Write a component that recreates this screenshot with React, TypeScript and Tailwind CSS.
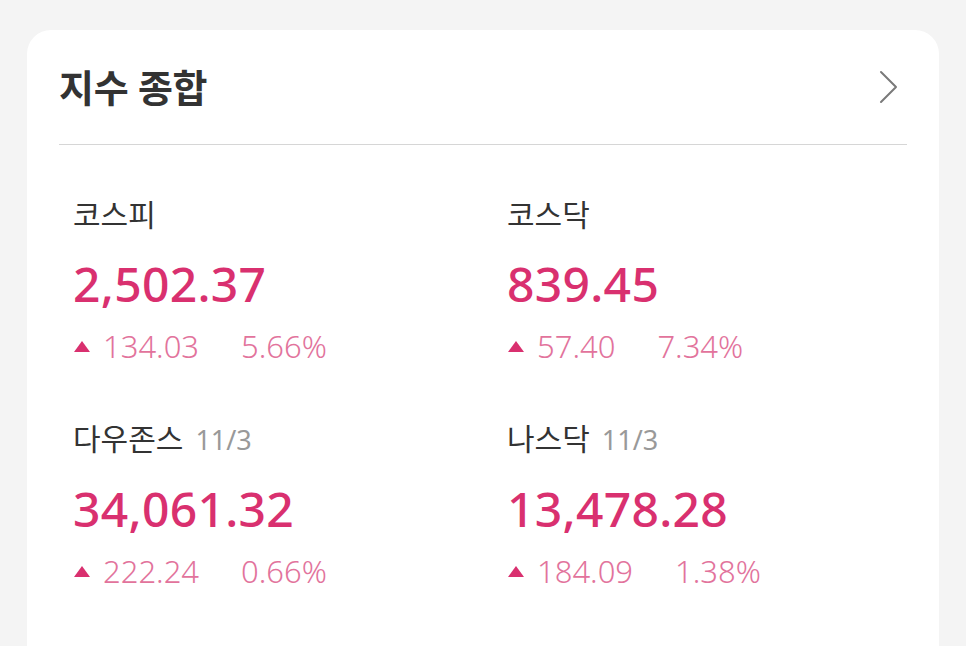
const indices = [
  { name: "코스피", date: null, value: "2,502.37", change: "134.03", rate: "5.66%" },
  { name: "코스닥", date: null, value: "839.45", change: "57.40", rate: "7.34%" },
  { name: "다우존스", date: "11/3", value: "34,061.32", change: "222.24", rate: "0.66%" },
  { name: "나스닥", date: "11/3", value: "13,478.28", change: "184.09", rate: "1.38%" },
];

const font = { fontFamily: '"Noto Sans", "Noto Sans CJK KR", sans-serif' };

function UpTriangle() {
  return (
    <svg width="18" height="13" viewBox="0 0 18 13" className="shrink-0">
      <polygon points="9,1 17,12 1,12" fill="#d9306f" />
    </svg>
  );
}

export default function App() {
  return (
    <div className="min-h-[646px] bg-[#f4f4f4] px-[27px] pt-[30px]" style={font}>
      <section className="min-h-[616px] rounded-t-[24px] bg-white px-[32px]">
        <header className="flex h-[115px] items-center justify-between border-b border-[#d6d6d6]">
          <h1 className="text-[38px] font-bold leading-[42px] tracking-[-0.3px] text-[#333333]">
            지수 종합
          </h1>
          <svg width="20" height="34" viewBox="0 0 20 34" className="mr-[8px]">
            <polyline
              points="2,2 17,17 2,32"
              fill="none"
              stroke="#7a7a7a"
              strokeWidth="2"
              strokeLinecap="round"
              strokeLinejoin="round"
            />
          </svg>
        </header>

        <div className="grid grid-cols-[434px_1fr] gap-y-[55px] pl-[14px] pt-[50px]">
          {indices.map((item) => (
            <article key={item.name} className="flex flex-col">
              <p className="flex items-baseline gap-[12px] text-[30px] leading-[40px] text-[#333333]">
                <span>{item.name}</span>
                {item.date && (
                  <span className="text-[27px] text-[#999999]">{item.date}</span>
                )}
              </p>
              <p className="mt-[21px] text-[48px] font-medium leading-[56px] tracking-[0.3px] text-[#d9306f]">
                {item.value}
              </p>
              <div className="mt-[16px] flex items-center text-[31px] font-light leading-[36px] text-[#e2739c]">
                <UpTriangle />
                <span className="ml-[12px]">{item.change}</span>
                <span className="ml-[42px]">{item.rate}</span>
              </div>
            </article>
          ))}
        </div>
      </section>
    </div>
  );
}
